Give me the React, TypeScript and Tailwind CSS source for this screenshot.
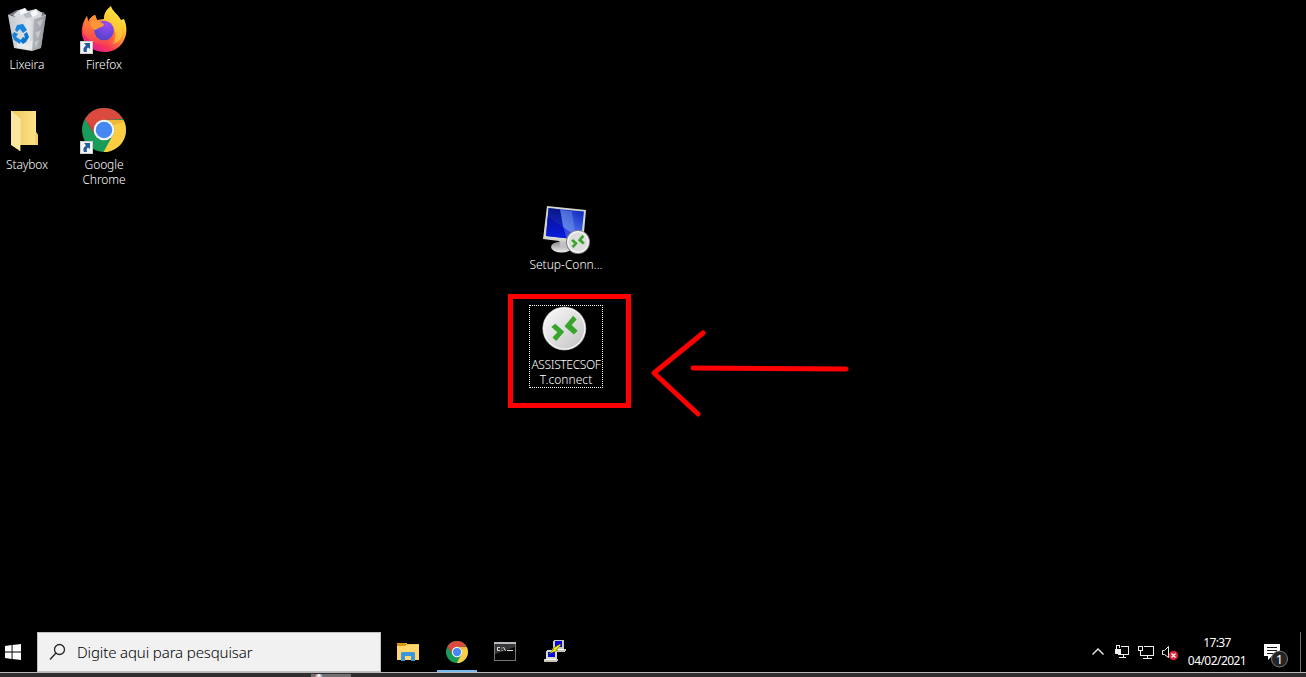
import React from "react";

type IconProps = { className?: string };

function RecycleBinIcon() {
  return (
    <svg width="48" height="48" viewBox="0 0 48 48">
      <defs>
        <linearGradient id="bin" x1="0" x2="1">
          <stop offset="0" stopColor="#c5c9ce" />
          <stop offset="0.55" stopColor="#e3e5e7" />
          <stop offset="0.75" stopColor="#c3c7cb" />
          <stop offset="1" stopColor="#898f95" />
        </linearGradient>
      </defs>
      <path d="M5 10 L14 5 L40 7 L43 10 L31 14 Z" fill="#747a80" />
      <path d="M10 10 L16 5 L22 3 L25 6 L33 4 L39 8 L38 13 L30 16 L14 14 Z" fill="#d7dade" />
      <path d="M16 6 L22 3 L24 8 L18 10 Z M27 8 L33 4 L35 9 L30 12 Z" fill="#f7f8f9" />
      <path d="M20 9 L27 7 L29 12 L23 13 Z" fill="#b5bbc1" />
      <path d="M5 10 L15 13 L31 14 L43 10 L38 43 L29 46 L11 43 Z" fill="url(#bin)" />
      <path d="M31 14 L43 10 L38 43 L29 46 Z" fill="#9ba0a5" opacity=".65" />
      <path d="M34 17 L40 14 L37 22 Z M32 28 L38 25 L35 34 Z M31 37 L36 35 L33 43 Z" fill="#c3c6ca" />
      <path d="M15 34 L25 40 L30 34 L29 44 L14 43 Z" fill="#f1f2f3" opacity=".6" />
      <path d="M5 10 L15 13 L31 14 L43 10" fill="none" stroke="#d5d7d9" strokeWidth="0.7" />
      <path d="M14 20 L20 19 L24 25 L20 28 L17 24 L14 27 L12 25 Z" fill="#1784df" />
      <path d="M11 27 L15 29 L13 32 L18 35 L17 39 L11 35 L9 30 Z" fill="#1784df" />
      <path d="M24 27 L26 32 L23 37 L20 39 L17 36 L20 32 L22 33 L21 29 Z" fill="#0877d2" />
    </svg>
  );
}

function FirefoxIcon() {
  return (
    <svg width="48" height="48" viewBox="0 0 48 48">
      <defs>
        <linearGradient id="fxBody" x1="0.82" y1="0.05" x2="0.22" y2="0.9">
          <stop offset="0" stopColor="#fff44f" />
          <stop offset="0.3" stopColor="#ffc52c" />
          <stop offset="0.55" stopColor="#ff8139" />
          <stop offset="0.8" stopColor="#fa3658" />
          <stop offset="1" stopColor="#e5208b" />
        </linearGradient>
        <radialGradient id="fxGlobe" cx="0.65" cy="0.15" r="0.95">
          <stop offset="0" stopColor="#a04bf0" />
          <stop offset="0.5" stopColor="#7148dd" />
          <stop offset="1" stopColor="#4f3fc4" />
        </radialGradient>
        <linearGradient id="fxHead" x1="0.6" y1="0" x2="0.3" y2="1">
          <stop offset="0" stopColor="#ffa22e" />
          <stop offset="0.55" stopColor="#ff6b3b" />
          <stop offset="1" stopColor="#f83a59" />
        </linearGradient>
      </defs>
      <path d="M31 1 C32 6 38 9 41 15 L44 14 C51 29 42 47 25 47 C9 47 0 35 2 23 C3 17 5 14 7 11 L8 17 C10 13 12 11 15 10 L17 15 L24 14 C24 8 27 4 31 1Z" fill="url(#fxBody)" />
      <path d="M3 22 C4 17 6 14 7 11 L8 17 C10 13 12 11 15 10 L17 15 C22 15 28 17 32 20 C38 27 35 38 25 39 C14 40 7 34 3 28Z" fill="url(#fxHead)" />
      <path d="M31 2 C30 10 42 15 42 28 C42 34 38 38 33 39 C37 33 36 27 33 23 C30 18 25 16 24 14 C24 8 27 4 31 2Z" fill="#ffd43a" opacity=".6" />
      <circle cx="24" cy="25.5" r="9.8" fill="url(#fxGlobe)" />
      <path d="M12 16 C17 15 24 18 24 20 C22 23 18 22 16 25 C12 24 9 20 12 16Z" fill="#ff9635" />
    </svg>
  );
}

function ChromeIcon({ className }: IconProps) {
  return (
    <svg className={className} viewBox="0 0 48 48">
      <circle cx="24" cy="24" r="24" fill="#199b59" />
      <path d="M3.2 12 A24 24 0 0 1 44.8 12 L24 13 A11 11 0 0 0 14 29 Z" fill="#db4a3f" />
      <path d="M24 13 H45.3 A24 24 0 0 1 23.5 48 L34 29 A11 11 0 0 0 24 13Z" fill="#ffcd42" />
      <path d="M28 13 H45.3 L46 15 L33 19Z" fill="#d88e20" opacity=".35" />
      <path d="M3.2 12 L13 30 L15 25 Z" fill="#872f26" opacity=".25" />
      <circle cx="24" cy="24" r="11.3" fill="#f4f6f7" />
      <circle cx="24" cy="24" r="9" fill="#4688f1" />
    </svg>
  );
}

function FolderIcon() {
  return (
    <svg width="48" height="48" viewBox="0 0 48 48">
      <defs>
        <linearGradient id="folder" x1="0" x2="1">
          <stop offset="0" stopColor="#eec65e" />
          <stop offset="1" stopColor="#ffe48b" />
        </linearGradient>
      </defs>
      <path d="M8 3 H33 V24 L35 27 V37 H8Z" fill="url(#folder)" />
      <path d="M33 24 L35 27 V37 H32 V26Z" fill="#f5ce65" />
      <path d="M8 3 L17 11 V43 L8 37Z" fill="#fbe6a0" />
      <path d="M8 3 L17 11 V43" fill="none" stroke="#ffeeb7" strokeWidth="0.8" />
    </svg>
  );
}

function ShortcutBadge() {
  return (
    <svg className="absolute top-[36px] left-0" width="13" height="13" viewBox="0 0 13 13">
      <path d="M0 0H13V13H0Z" fill="#c9ccd0" />
      <path d="M1 1H12V12H1Z" fill="#f5f6f7" />
      <path d="M4 2H10V8L8 6.5C6.5 7.5 6.5 9 7 11H4C2.5 8.5 3.5 6.2 6 4.5Z" fill="#245c9e" />
    </svg>
  );
}

function ConnectionMarks() {
  return (
    <>
      <path d="M9.6 20.5 L13.6 17.2 L22.5 25.2 L14.5 34.5 L10.8 31 L15.7 25.8 Z" fill="#37a52a" />
      <path d="M31.5 9.3 L35 13 L30 18.5 L36 24.3 L32.2 28 L22.8 19.7 Z" fill="#37a52a" />
    </>
  );
}

function RemoteIcon() {
  return (
    <svg width="46" height="46" viewBox="0 0 46 46">
      <defs>
        <linearGradient id="silver" x1="0" x2="1" y2="1">
          <stop offset="0" stopColor="#fafafa" />
          <stop offset=".55" stopColor="#dcdcdc" />
          <stop offset="1" stopColor="#c2c2c2" />
        </linearGradient>
      </defs>
      <circle cx="23.3" cy="22.5" r="22" fill="#8b8b8b" />
      <circle cx="23.3" cy="22.5" r="21.3" fill="#fafafa" />
      <circle cx="23.3" cy="22.5" r="20" fill="url(#silver)" />
      <g transform="translate(.7 .5)"><ConnectionMarks /></g>
    </svg>
  );
}

function MonitorIcon() {
  return (
    <svg width="48" height="50" viewBox="0 0 48 50">
      <defs>
        <linearGradient id="screen" x1="0" y1="1" x2=".8" y2="0">
          <stop offset="0" stopColor="#0714a5" />
          <stop offset=".45" stopColor="#0912dc" />
          <stop offset=".48" stopColor="#4b72ec" />
          <stop offset="1" stopColor="#102cbc" />
        </linearGradient>
        <linearGradient id="pane" y1="0" y2="1" x2="0">
          <stop offset="0" stopColor="#020a72" />
          <stop offset="1" stopColor="#0a1fe6" />
        </linearGradient>
        <linearGradient id="stand" x2="0" y1="0" y2="1">
          <stop offset="0" stopColor="#888" />
          <stop offset="1" stopColor="#eee" />
        </linearGradient>
      </defs>
      <ellipse cx="19.5" cy="42" rx="10.5" ry="5.5" fill="url(#stand)" />
      <path d="M17 33 H29 L27 43 H18Z" fill="#bfc1c3" />
      <path d="M5 1 L44 5 L41 39 L1 34Z" fill="#d7d6cd" />
      <path d="M6.5 3 L42 6.7 L39 36 L4 32Z" fill="#d9ddda" />
      <path d="M6.5 3 L42 6.5 L39 35 L4 31Z" fill="url(#screen)" />
      <path d="M18 5 L30 6.5 L34 34 L24 33Z" fill="#809ee9" opacity=".4" />
      <path d="M6.5 3 L18 4.5 L23 33 L4 31Z" fill="url(#pane)" opacity=".85" />
      <svg x="24" y="25" width="24" height="24" viewBox="0 0 46 46">
        <circle cx="23" cy="23" r="23" fill="#828282" />
        <circle cx="23" cy="23" r="21" fill="#f8f8f8" />
        <circle cx="23" cy="23" r="18.5" fill="#dedede" />
        <ConnectionMarks />
      </svg>
    </svg>
  );
}

function Label({ children, spacing }: { children: React.ReactNode; spacing: string }) {
  return <span className={"block whitespace-pre text-center text-[12px] font-[350] leading-[15px] text-white " + spacing}>{children}</span>;
}

function Desktop() {
  return (
    <main className="relative h-[632px] w-full shrink-0">
      <div className="absolute top-[5px] left-[-13px] flex w-20 flex-col items-center">
        <div className="h-[52px]"><RecycleBinIcon /></div>
        <Label spacing="tracking-[-0.05px]">Lixeira</Label>
      </div>
      <div className="absolute top-[5px] left-16 flex w-20 flex-col items-center">
        <div className="relative h-[52px] w-12"><FirefoxIcon /><span className="absolute top-0 left-0"><ShortcutBadge /></span></div>
        <Label spacing="tracking-[-0.05px]">Firefox</Label>
      </div>
      <div className="absolute top-[108px] left-[-13px] flex w-20 flex-col items-center">
        <div className="h-[49px]"><FolderIcon /></div>
        <Label spacing="tracking-[-0.1px]">Staybox</Label>
      </div>
      <div className="absolute top-[105px] left-16 flex w-20 flex-col items-center">
        <div className="relative flex h-[52px] w-12 justify-center pt-[3px]"><ChromeIcon className="h-11 w-11" /><span className="absolute top-0 left-0"><ShortcutBadge /></span></div>
        <Label spacing="tracking-[-0.1px]">Google</Label>
        <Label spacing="tracking-[-0.05px]">Chrome</Label>
      </div>
      <div className="absolute top-[205px] left-[526px] flex w-20 flex-col items-center">
        <div className="h-[52px]"><MonitorIcon /></div>
        <Label spacing="tracking-[0px]">Setup-Conn...</Label>
      </div>
      <div className="absolute top-[294px] left-[508px] h-[114px] w-[123px] border-[5px] border-[#ff0000] pt-[6px] pl-4">
        <div className="flex h-[83px] w-[74px] flex-col items-center border border-dotted border-white">
          <div className="mr-[4px] h-[51px] shrink-0"><RemoteIcon /></div>
          <Label spacing="tracking-[-0.35px]">ASSISTECSOF</Label>
          <Label spacing="tracking-[0.05px]">T.connect</Label>
        </div>
      </div>
      <svg className="absolute top-[325px] left-[645px]" width="210" height="96" viewBox="645 325 210 96">
        <path d="M703 333 L654 373 L698 414 M693 368 L846 369" fill="none" stroke="#ff0000" strokeWidth="5" strokeLinecap="round" strokeLinejoin="round" />
      </svg>
    </main>
  );
}

function ExplorerIcon() {
  return (
    <svg width="22" height="18" viewBox="0 0 22 18">
      <path d="M0 0H10V1H22V17H0Z" fill="#f5c653" />
      <path d="M0 0H9L10 2L8 3H0Z" fill="#d99310" />
      <path d="M0 3H8L10 2H22V17H0Z" fill="#ffd76c" />
      <path d="M4 10.5Q4 9 5.5 9H16.5Q18 9 18 10.5V18H14V13H8V18H4Z" fill="#3a96dd" />
    </svg>
  );
}

function TerminalIcon() {
  return (
    <svg width="22" height="19" viewBox="0 0 22 19">
      <path d="M0 0H22V19H0Z" fill="#777" />
      <path d="M0 0H22V2H0Z" fill="#b9bdc2" />
      <path d="M1 2H21V18H1Z" fill="#050505" />
      <path d="M1 2H21V5L1 12Z" fill="#383838" />
      <path d="M6 5.5H3.5V8.5H6M8 5.5V6.5M8 8V9M9.5 5L11.5 9M13 8.5H19" fill="none" stroke="#ddd" />
    </svg>
  );
}

function PuttyIcon() {
  return (
    <svg width="22" height="23" viewBox="0 0 22 23" shapeRendering="crispEdges">
      <path d="M10 0H20V9H9V1Z" fill="#c9c9c0" />
      <path d="M11 1H18V7H11Z" fill="#0909df" />
      <path d="M8 9H22V11L20 12H8Z" fill="#c4c4b9" />
      <path d="M9 9.5H20" stroke="#fff" />
      <path d="M3 10H13V19H2V11Z" fill="#d7d7ce" />
      <path d="M4 12H11V17H4Z" fill="#0909df" />
      <path d="M0 19H14V21L12 22H0Z" fill="#c4c4b9" />
      <path d="M1 19.5H12" stroke="#fff" />
      <path d="M16 4L8 9H10L5 14L14 10H12L17 5Z" fill="#f7ee00" stroke="#555000" strokeWidth=".5" shapeRendering="auto" />
    </svg>
  );
}

function TrayIcons() {
  return (
    <svg width="88" height="20" viewBox="0 0 88 20" shapeRendering="crispEdges">
      <path d="M1.5 12.5L7 7L12.5 12.5" fill="none" stroke="#eee" strokeWidth="1.4" shapeRendering="auto" />
      <path d="M30 4.5H37.5V12.5H27M32 13V15M28 15.5H35" fill="none" stroke="#eee" />
      <path d="M24 7H30V12H24Z" fill="#eee" />
      <path d="M25.5 7V3.5H28.5V6" fill="none" stroke="#eee" />
      <path d="M53 4.5H62.5V13.5H49.5V8M56.5 13V16M52 16.5H61" fill="none" stroke="#eee" />
      <path d="M47.5 4.5H51.5V8.5H47.5Z" fill="none" stroke="#eee" />
      <path d="M71.5 8.5H73.5L77.5 4.5V15.5L73.5 12.5H71.5Z" fill="none" stroke="#eee" shapeRendering="auto" />
      <circle cx="82.5" cy="13.5" r="4.7" fill="#d92335" shapeRendering="auto" />
      <path d="M80.5 11.5L84.5 15.5M84.5 11.5L80.5 15.5" stroke="white" strokeWidth="1.3" shapeRendering="auto" />
    </svg>
  );
}

function Taskbar() {
  return (
    <footer className="flex h-10 w-full shrink-0">
      <div className="flex w-[37px] items-center pl-[5px]">
        <svg width="16" height="16" viewBox="0 0 17 17"><path d="M0 2L7 1V8H0ZM8 1L17 0V8H8ZM0 9H7V16L0 15ZM8 9H17V17L8 16Z" fill="white" /></svg>
      </div>
      <div className="flex w-[344px] items-center border border-[#c1c1c1] bg-[#f1f1f1] pl-[10px]">
        <svg width="19" height="19" viewBox="0 0 19 19"><circle cx="11.5" cy="6.5" r="5" fill="none" stroke="#282828" strokeWidth="1.3" /><path d="M8 10L2 16.5" stroke="#282828" strokeWidth="1.4" /></svg>
        <span className="ml-[10px] whitespace-nowrap text-[15px] font-light leading-5 tracking-[-0.12px] text-black">Digite aqui para pesquisar</span>
      </div>
      <div className="flex h-full">
        <div className="flex w-14 items-center justify-center pr-[3px]"><ExplorerIcon /></div>
        <div className="flex h-full w-10 flex-col items-center justify-between"><ChromeIcon className="mt-[9px] h-[22px] w-[22px]" /><div className="h-[2px] w-10 bg-[#76b9ed]" /></div>
        <div className="flex w-14 items-center justify-center pb-px"><TerminalIcon /></div>
        <div className="flex w-11 items-center justify-center pb-px"><PuttyIcon /></div>
      </div>
      <div className="ml-auto flex h-full">
        <div className="flex w-[95px] items-center"><TrayIcons /></div>
        <div className="flex w-[62px] flex-col items-center justify-center text-[12px] leading-[18px] text-white"><span className="tracking-[-0.65px]">17:37</span><span className="whitespace-nowrap tracking-[-0.55px]">04/02/2021</span></div>
        <div className="flex w-[52px] items-center justify-center pt-[5px] pl-[2px]">
          <svg width="26" height="29" viewBox="0 0 26 29">
            <path d="M2 4H18V16H10L6 20V16H2Z" fill="white" /><path d="M5 7.5H15M5 10.5H15M5 13.5H11" stroke="#151515" />
            <circle cx="17.5" cy="19" r="8" fill="#242424" stroke="#777" />
            <text x="17.5" y="23.5" textAnchor="middle" fontSize="13" fill="white">1</text>
          </svg>
        </div>
        <div className="w-[6px] border-l border-[#707070]" />
      </div>
    </footer>
  );
}

export default function App() {
  return (
    <div className="flex h-[677px] w-[1306px] flex-col overflow-hidden bg-black font-['Noto_Sans','Open_Sans',sans-serif]">
      <Desktop />
      <Taskbar />
      <div className="flex h-[5px] border-t border-[#b9b9b9] bg-[#302e2f]">
        <div className="mt-px ml-[311px] flex h-[3px] w-10 bg-[#716f70] pl-1"><div className="h-1 w-2 rounded-t-full bg-gradient-to-r from-[#c88267] via-white to-[#5982b2]" /></div>
      </div>
    </div>
  );
}
